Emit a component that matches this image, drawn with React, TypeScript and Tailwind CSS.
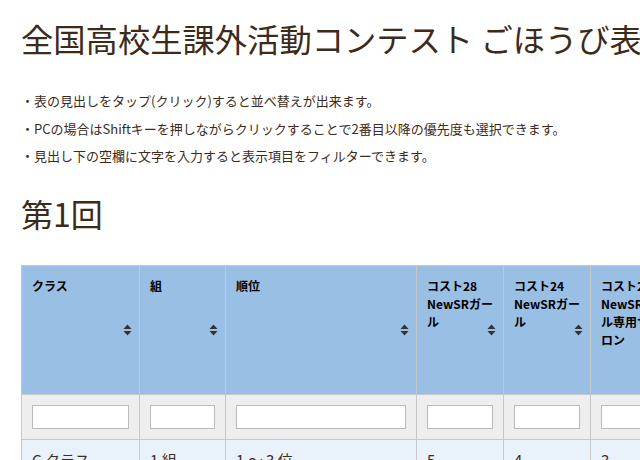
import type { ReactNode } from 'react'

const jp = { fontFamily: '"Noto Sans CJK JP", "Noto Sans", sans-serif' }

const notes = [
  '・表の見出しをタップ(クリック)すると並べ替えが出来ます。',
  '・PCの場合はShiftキーを押しながらクリックすることで2番目以降の優先度も選択できます。',
  '・見出し下の空欄に文字を入力すると表示項目をフィルターできます。',
]

const columns: { key: string; label: ReactNode; width: number; value: string }[] = [
  { key: 'class', label: 'クラス', width: 118, value: 'C クラス' },
  { key: 'group', label: '組', width: 86, value: '1 組' },
  { key: 'rank', label: '順位', width: 191, value: '1 ～ 3 位' },
  { key: 'c28', label: 'コスト28 NewSRガール', width: 87, value: '5' },
  { key: 'c24', label: 'コスト24 NewSRガール', width: 87, value: '4' },
  {
    key: 'c20',
    label: <>コスト20 NewSRガール専用サ<span className="whitespace-nowrap">ロン</span></>,
    width: 87,
    value: '3',
  },
  { key: 'c16', label: 'コスト16 SRガール', width: 87, value: '2' },
]

function SortIcon() {
  return (
    <svg width="9" height="12" viewBox="0 0 9 12" className="absolute right-[7px] top-1/2 -translate-y-1/2">
      <path d="M4.5 0.5 L8.5 5 H0.5 Z" fill="#333" />
      <path d="M4.5 11.5 L8.5 7 H0.5 Z" fill="#333" />
    </svg>
  )
}

export default function App() {
  return (
    <div className="w-[640px] h-[460px] overflow-hidden bg-white text-[#3d2b1a]" style={jp}>
      <div className="pl-[21px] pt-[16px] whitespace-nowrap">
        <h1 className="text-[32.3px] leading-[44px] font-normal">全国高校生課外活動コンテスト ごほうび表</h1>

        <div className="mt-[27px] text-[13px] leading-[27.5px]">
          {notes.map(n => (
            <p key={n}>{n}</p>
          ))}
        </div>

        <h2 className="mt-[21px] text-[32px] leading-[44px] font-normal">第1回</h2>

        <table className="mt-[30px] w-[743px] table-fixed border-collapse whitespace-normal">
          <colgroup>
            {columns.map(c => (
              <col key={c.key} style={{ width: c.width }} />
            ))}
          </colgroup>
          <thead>
            <tr className="h-[129px] bg-[#9abfe5]">
              {columns.map(c => (
                <th
                  key={c.key}
                  className="relative border border-[#c8c8c8] align-top px-[10px] pt-[11px] text-left text-[12px] leading-[18px] font-bold text-black"
                >
                  {c.label}
                  <SortIcon />
                </th>
              ))}
            </tr>
            <tr className="bg-[#eeeeee]">
              {columns.map(c => (
                <td key={c.key} className="border border-[#c8c8c8] px-[10px] py-[10px]">
                  <input className="block w-full h-[24px] border border-[#bbbbbb] bg-white" />
                </td>
              ))}
            </tr>
          </thead>
          <tbody>
            <tr className="bg-[#e9f1fa]">
              {columns.map(c => (
                <td key={c.key} className="border border-[#c8c8c8] px-[10px] pt-[9px] text-[15px] leading-[22px] align-top">
                  {c.value}
                </td>
              ))}
            </tr>
          </tbody>
        </table>
      </div>
    </div>
  )
}
